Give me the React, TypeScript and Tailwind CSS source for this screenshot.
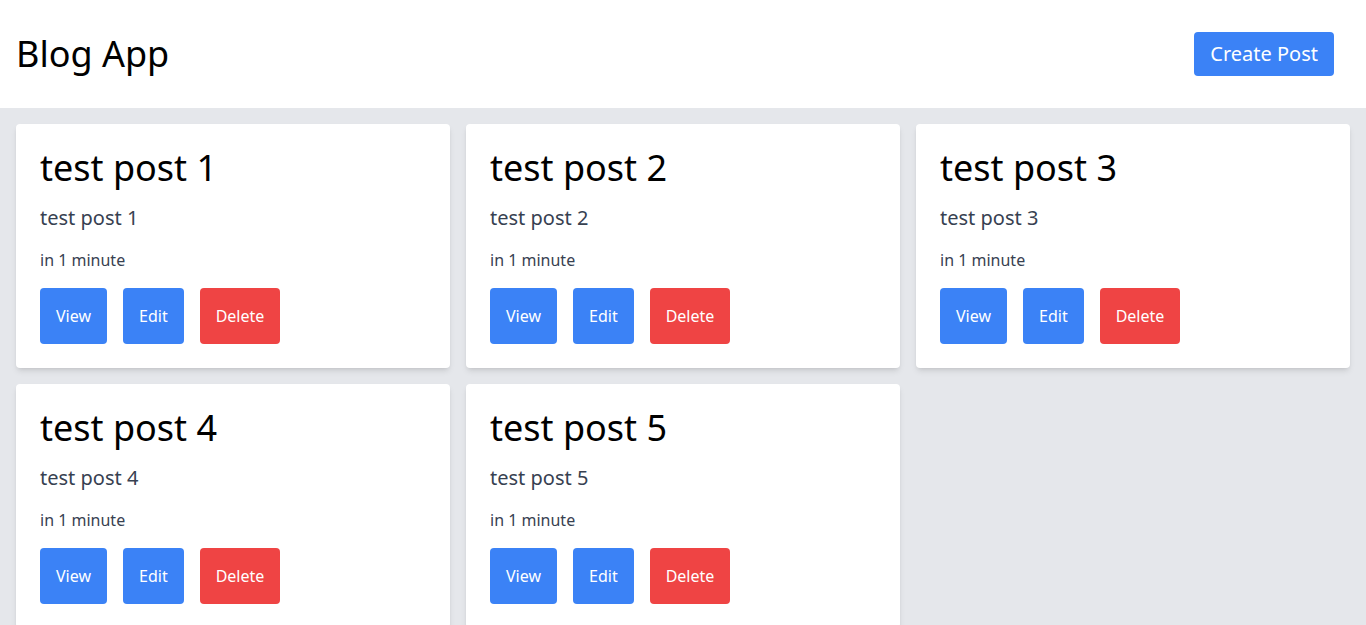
import React from 'react'

type Post = { id: number; title: string; body: string; time: string }

const posts: Post[] = [1, 2, 3, 4, 5].map((n) => ({
  id: n,
  title: `test post ${n}`,
  body: `test post ${n}`,
  time: 'in 1 minute',
}))

/** 单个文章卡片 */
const PostCard: React.FC<{ post: Post }> = ({ post }) => (
  <div className="bg-white rounded shadow-md p-6">
    <h2 className="text-4xl text-black mb-4">{post.title}</h2>
    <p className="text-xl text-[#374151] mb-4">{post.body}</p>
    <p className="text-base text-[#374151] mb-4">{post.time}</p>
    <div className="flex gap-4">
      <button type="button" className="bg-[#3b82f6] text-white rounded p-4">View</button>
      <button type="button" className="bg-[#3b82f6] text-white rounded p-4">Edit</button>
      <button type="button" className="bg-[#ef4444] text-white rounded p-4">Delete</button>
    </div>
  </div>
)

export default function App() {
  return (
    <div className="min-h-screen bg-[#e5e7eb] font-['Noto_Sans',sans-serif]">
      <header className="bg-white flex items-center justify-between py-8 pl-4 pr-8">
        <h1 className="text-4xl text-black">Blog App</h1>
        <button type="button" className="bg-[#3b82f6] text-white text-xl rounded px-4 py-2">
          Create Post
        </button>
      </header>
      <main className="grid grid-cols-3 gap-4 p-4">
        {posts.map((p) => (
          <PostCard key={p.id} post={p} />
        ))}
      </main>
    </div>
  )
}
